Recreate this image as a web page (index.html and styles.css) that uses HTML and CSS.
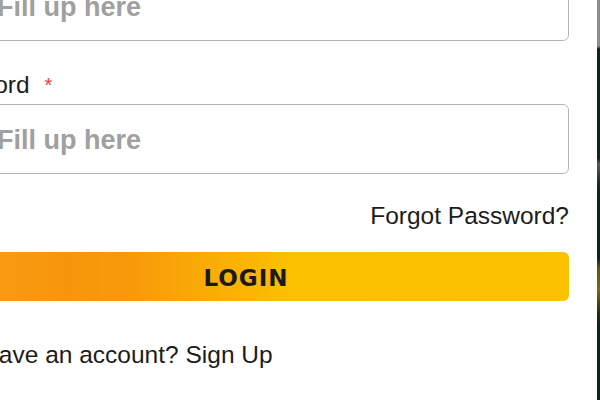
FILE: index.html
```html
<!DOCTYPE html>
<html lang="en">
<head>
<meta charset="utf-8">
<title>Login</title>
<link rel="stylesheet" href="styles.css">
</head>
<body>
<div class="page">
  <div class="panel">
    <form class="form">
      <input class="field" type="text" placeholder="Fill up here">
      <label class="label">Password <span class="req">*</span></label>
      <input class="field" type="password" placeholder="Fill up here">
      <div class="forgot-row"><a class="forgot">Forgot Password?</a></div>
      <button class="login" type="button">LOGIN</button>
      <p class="signup">Don't have an account? Sign Up</p>
    </form>
  </div>
  <div class="backdrop"></div>
</div>
</body>
</html>
```
FILE: styles.css
```css
html, body {
  margin: 0;
  padding: 0;
  background: #ffffff;
}
.page {
  display: flex;
  width: 600px;
  height: 400px;
  overflow: hidden;
}
.panel {
  width: 597px;
  flex: none;
  background: #ffffff;
  overflow: hidden;
}
.backdrop {
  flex: 1;
  background: linear-gradient(180deg,
    #8c8c8c 0px, #8c8c8c 46px,
    #10231f 49px, #0f221e 158px,
    #55595a 164px, #2d3533 178px,
    #0f221e 190px, #0f221e 258px,
    #5e5412 268px, #786a10 290px,
    #2a2e14 312px, #0f221e 325px, #0f221e 400px);
}
.form {
  display: flex;
  flex-direction: column;
  width: 647px;
  margin-left: -78px;
  margin-top: -29px;
  font-family: "Liberation Sans", Arial, sans-serif;
  color: #1c1c1c;
}
.field {
  box-sizing: border-box;
  height: 70px;
  width: 100%;
  margin: 0;
  padding: 2px 12px 0 74px;
  border: 1.5px solid #b4b4b4;
  border-radius: 6px;
  background: #fff;
  font-family: "Liberation Sans", Arial, sans-serif;
  font-size: 27px;
  font-weight: bold;
  outline: none;
}
.field::placeholder {
  color: #a0a0a0;
  opacity: 1;
}
.label {
  margin: 30px 0 5px;
  font-size: 24.5px;
  line-height: 28px;
}
.req {
  color: #f0384c;
  font-size: 20px;
  margin-left: 8px;
  vertical-align: top;
}
.forgot-row {
  display: flex;
  justify-content: flex-end;
  margin-top: 28px;
}
.forgot {
  font-size: 24.5px;
  line-height: 28px;
}
.login {
  margin-top: 22px;
  height: 49px;
  width: 100%;
  border: none;
  border-radius: 6px;
  background: linear-gradient(90deg, #f8a11b 0%, #f7960b 22%, #f8990a 32%, #fbc000 57%, #fcc200 100%);
  font-family: "DejaVu Sans", Verdana, sans-serif;
  font-weight: bold;
  font-size: 23px;
  letter-spacing: 1px;
  color: #1a1a1a;
  padding: 3px 0 0 1px;
}
.signup {
  margin: 40px 0 0;
  font-size: 24.5px;
  line-height: 28px;
}
```
